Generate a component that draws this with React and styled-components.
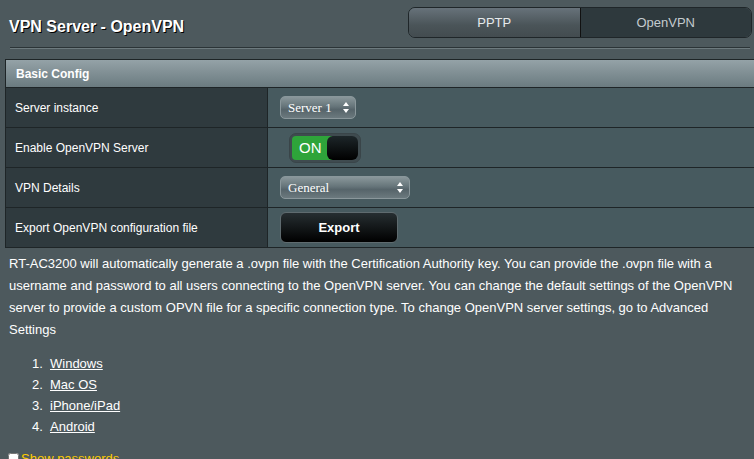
import styled, { createGlobalStyle } from "styled-components";

const GlobalStyle = createGlobalStyle`
  html, body {
    margin: 0;
    padding: 0;
    background: #4d595d;
    overflow: hidden;
  }
  body {
    font-family: "Liberation Sans", Arial, sans-serif;
    font-size: 12px;
    color: #fff;
  }
`;

const Page = styled.div`
  width: 775px;
  padding-left: 5px;
`;

const HeaderRow = styled.div`
  width: 747px;
  height: 47px;
  display: flex;
  justify-content: space-between;
  align-items: flex-start;
`;

const Title = styled.h1`
  margin: 17px 0 0 4px;
  font-size: 16px;
  line-height: 20px;
  font-weight: bold;
  color: #fff;
  text-shadow: 1px 1px 0 #000;
`;

const Tabs = styled.div`
  margin-top: 7px;
  width: 344px;
  height: 31px;
  display: flex;
  border: 1px solid #1f2629;
  border-radius: 7px;
  overflow: hidden;
  box-sizing: border-box;
`;

const Tab = styled.div`
  flex: 1;
  display: flex;
  align-items: center;
  justify-content: center;
  font-size: 13px;
  color: ${(p) => (p.$active ? "#c3cbcf" : "#e6eaec")};
  background: ${(p) =>
    p.$active ? "#2e393d" : "linear-gradient(#67727a, #4a5458 60%, #434c50)"};
  border-left: ${(p) => (p.$active ? "1px solid #111" : "none")};
`;

const Separator = styled.div`
  margin: 0 0 10px 5px;
  width: 740px;
  height: 1px;
  background: #2b3437;
  border-bottom: 1px solid #6d7a7e;
`;

const Table = styled.div`
  display: grid;
  grid-template-columns: 261px 1fr;
  gap: 1px;
  padding: 1px;
  background: #1e2527;
`;

const TableHead = styled.div`
  grid-column: 1 / -1;
  height: 27px;
  display: flex;
  align-items: center;
  padding-left: 10px;
  font-weight: bold;
  background: linear-gradient(#94a2a7, #6b7b80);
`;

const Label = styled.div`
  height: 39px;
  display: flex;
  align-items: center;
  padding-left: 9px;
  background: #2f3a3e;
`;

const Field = styled.div`
  height: 39px;
  display: flex;
  align-items: center;
  padding-left: 12px;
  background: #475a5f;
`;

const Select = styled.div`
  width: ${(p) => p.$w}px;
  height: 23px;
  box-sizing: border-box;
  display: flex;
  align-items: center;
  justify-content: space-between;
  padding: 0 6px 0 7px;
  border: 1px solid #8a979b;
  border-radius: 5px;
  background: linear-gradient(#8a979b, #66757a 45%, #56646a 60%, #6b797e);
  font-family: "Liberation Serif", "Times New Roman", serif;
  font-size: 13px;
  color: #fff;
`;

const Arrows = () => (
  <svg width="6" height="11" viewBox="0 0 6 11">
    <path d="M3 0 L6 4 L0 4 Z" fill="#fff" />
    <path d="M0 7 L6 7 L3 11 Z" fill="#fff" />
  </svg>
);

const Toggle = styled.div`
  margin-left: 9px;
  width: 72px;
  height: 30px;
  box-sizing: border-box;
  border: 1px solid #3a4549;
  border-radius: 7px;
  padding: 2px;
  display: flex;
  background: #3f4b4f;
`;

const ToggleOn = styled.div`
  width: 40px;
  display: flex;
  align-items: center;
  padding-left: 7px;
  box-sizing: border-box;
  background: #2ea43a;
  border-radius: 4px 0 0 4px;
  font-size: 15px;
  color: #fff;
`;

const Knob = styled.div`
  flex: 1;
  margin-left: -5px;
  border-radius: 6px;
  background: linear-gradient(#1d2629, #000);
`;

const ExportButton = styled.button`
  width: 118px;
  height: 31px;
  border: 1px solid #5f6b6f;
  border-radius: 6px;
  background: linear-gradient(#262e31, #000);
  color: #fff;
  font-family: "Liberation Sans", Arial, sans-serif;
  font-size: 13px;
  font-weight: bold;
  cursor: pointer;
`;

const Description = styled.p`
  margin: 5px 0 0 4px;
  width: 742px;
  font-size: 13px;
  line-height: 22px;
`;

const Clients = styled.ol`
  margin: 12px 0 0 4px;
  padding-left: 23px;
  list-style: none;
  counter-reset: client;
  font-size: 13px;
  line-height: 21px;
  li {
    counter-increment: client;
  }
  li::before {
    content: counter(client) ".";
    display: inline-block;
    width: 18px;
  }
`;

const ClientLink = styled.a`
  color: #fff;
  text-decoration: underline;
`;

const PasswordToggle = styled.label`
  margin-top: 14px;
  display: flex;
  align-items: center;
  gap: 2px;
  font-size: 13px;
  color: #ffcc00;
  input {
    margin: 0 0 0 3px;
    width: 11px;
    height: 11px;
  }
`;

const rows = [
  { label: "Server instance", type: "server" },
  { label: "Enable OpenVPN Server", type: "toggle" },
  { label: "VPN Details", type: "details" },
  { label: "Export OpenVPN configuration file", type: "export" },
];

const renderField = (type) => {
  if (type === "server")
    return (
      <Select $w={76}>
        Server 1 <Arrows />
      </Select>
    );
  if (type === "toggle")
    return (
      <Toggle>
        <ToggleOn>ON</ToggleOn>
        <Knob />
      </Toggle>
    );
  if (type === "details")
    return (
      <Select $w={130}>
        General <Arrows />
      </Select>
    );
  return <ExportButton>Export</ExportButton>;
};

const clients = ["Windows", "Mac OS", "iPhone/iPad", "Android"];

const App = () => {
  return (
    <Page>
      <GlobalStyle />
      <HeaderRow>
        <Title>VPN Server - OpenVPN</Title>
        <Tabs>
          <Tab>PPTP</Tab>
          <Tab $active>OpenVPN</Tab>
        </Tabs>
      </HeaderRow>
      <Separator />
      <Table>
        <TableHead>Basic Config</TableHead>
        {rows.map((row) => [
          <Label key={row.label}>{row.label}</Label>,
          <Field key={row.type}>{renderField(row.type)}</Field>,
        ])}
      </Table>
      <Description>
        RT-AC3200 will automatically generate a .ovpn file with the Certification Authority key. You can
        provide the .ovpn file with a username and password to all users connecting to the OpenVPN
        server. You can change the default settings of the OpenVPN server to provide a custom OPVN file
        for a specific connection type. To change OpenVPN server settings, go to Advanced Settings
      </Description>
      <Clients>
        {clients.map((c) => (
          <li key={c}>
            <ClientLink href="#">{c}</ClientLink>
          </li>
        ))}
      </Clients>
      <PasswordToggle>
        <input type="checkbox" />
        Show passwords
      </PasswordToggle>
    </Page>
  );
};

export default App;
